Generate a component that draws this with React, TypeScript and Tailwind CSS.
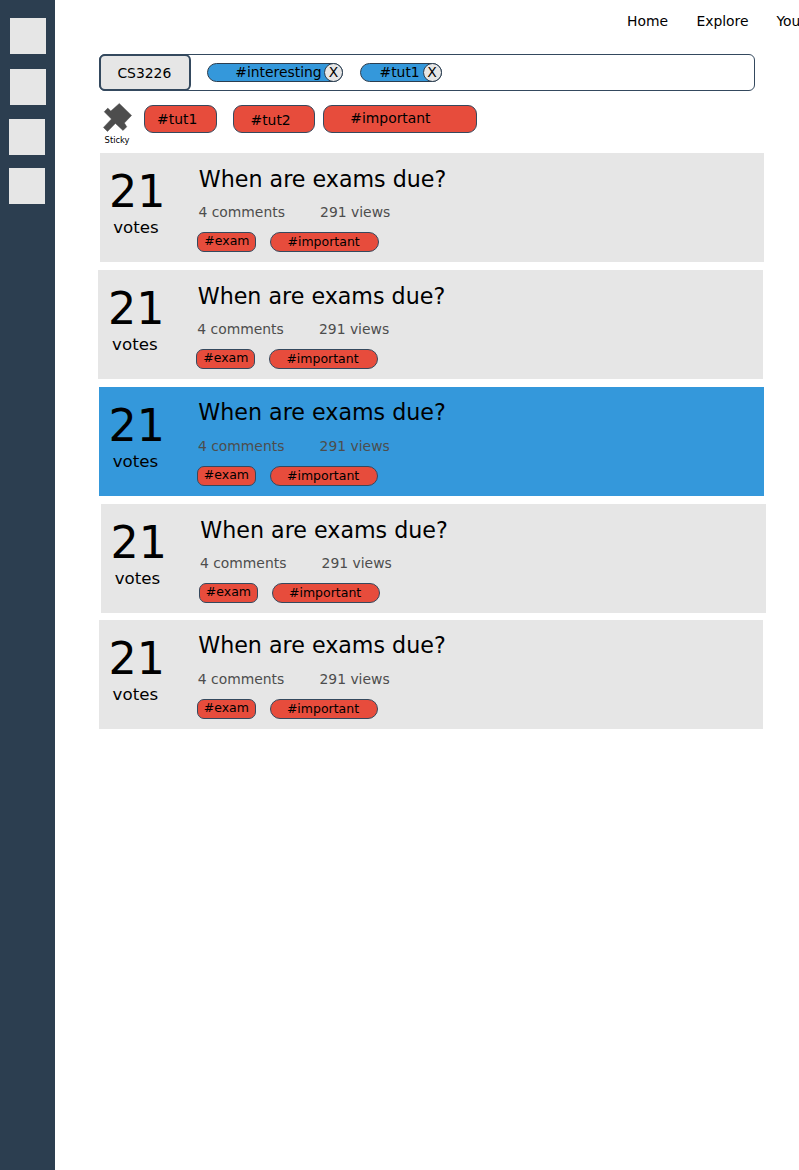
import { clsx } from "clsx";

const cards = [
  { place: "ml-[99.5px] mt-0 h-[109px]", head: "pt-[11px] pb-[8px]", active: false },
  { place: "ml-[98.4px] mt-[8px] h-[109px]", head: "pt-[11px] pb-[8px]", active: false },
  { place: "ml-[99px] mt-[8px] h-[109px]", head: "pt-[10px] pb-[9px]", active: true },
  { place: "ml-[101px] mt-[8px] h-[109px]", head: "pt-[11px] pb-[8px]", active: false },
  { place: "ml-[98.9px] mt-[7px] h-[109px]", head: "pt-[10px] pb-[9px]", active: false },
];

const shortcuts = ["ml-[10px]", "mt-[15px] ml-[10px]", "mt-[14px] ml-[9px]", "mt-[13px] ml-[9px]"];

function FilterPill({ label, className, labelClass }: { label: string; className: string; labelClass: string }) {
  return (
    <div
      className={clsx(
        "flex h-[19px] items-start justify-end rounded-full border border-[#2c3e50] bg-[#3498db] text-[13.9px] leading-4",
        className,
      )}
    >
      <span className={labelClass}>{label}</span>
      <span className="-my-px -mr-px flex size-[19px] shrink-0 items-start justify-center rounded-full border border-[#2c3e50] bg-[#e6e6e6]">
        X
      </span>
    </div>
  );
}

function StickyTag({ label, className }: { label: string; className: string }) {
  return (
    <div
      className={clsx(
        "h-7 rounded-[9px] border border-[#34495e] bg-[#e74c3c] text-[13.9px] leading-5",
        className,
      )}
    >
      {label}
    </div>
  );
}

function QuestionCard({ place, head, active }: { place: string; head: string; active: boolean }) {
  return (
    <article className={clsx("flex w-[664.5px] shrink-0", active ? "bg-[#3498db]" : "bg-[#e6e6e6]", place)}>
      <div className="w-[97.8px] shrink-0 pt-[15.5px] pl-[9.6px]">
        <div className="text-[44.4px] leading-[46px]">21</div>
        <div className="mt-[0.5px] pl-[4.1px] text-[16.66px] leading-[25px]">votes</div>
      </div>
      <div>
        <h2 className={clsx("pl-[1.5px] text-[22.2px] leading-[30px]", head)}>When are exams due?</h2>
        <div className="flex pl-[1.1px] text-[13.9px] leading-5 text-[#4d4d4d]">
          <span className="w-[121.7px]">4 comments</span>
          <span>291 views</span>
        </div>
        <div className="mt-[10px] flex gap-[14px] text-[12.5px] leading-[15px]">
          <span className="h-5 w-[59px] rounded-[7px] border border-[#34495e] bg-[#e74c3c] pl-[6px]">#exam</span>
          <span className="h-5 w-[108.5px] rounded-[10px] border border-[#34495e] bg-[#e74c3c] pt-[1px] pl-[16.2px]">
            #important
          </span>
        </div>
      </div>
    </article>
  );
}

export default function App() {
  return (
    <div className="flex h-[1170px] w-[799px] overflow-hidden bg-white font-['DejaVu_Sans',sans-serif] text-black">
      <aside className="w-[55px] shrink-0 bg-[#2c3e50] pt-[18px]">
        {shortcuts.map((place, i) => (
          <div key={i} className={clsx("size-9 bg-[#e6e6e6]", place)} />
        ))}
      </aside>

      <main className="-ml-[55px] flex min-w-0 flex-1 flex-col">
        <nav className="flex h-[54px] shrink-0 pt-[11px] pl-[627px] text-[13.9px] leading-5 whitespace-nowrap">
          <a className="w-[69.4px] shrink-0">Home</a>
          <a className="w-[80px] shrink-0">Explore</a>
          <a className="shrink-0">You</a>
        </nav>

        <div className="ml-[99px] flex h-[37px] w-[656px] shrink-0 items-center rounded-[6px] border border-[#34495e]">
          <div className="-ml-px h-[37px] w-[92px] shrink-0 rounded-[6px] border-2 border-[#34495e] bg-[#e6e6e6] pt-[7px] pl-[16.4px] text-[13.9px] leading-5">
            CS3226
          </div>
          <FilterPill label="#interesting" className="ml-4 w-[136px]" labelClass="mr-[2.3px]" />
          <FilterPill label="#tut1" className="ml-[17px] w-[81.5px]" labelClass="mr-[2.8px]" />
        </div>

        <div className="ml-[103px] flex h-[62px] shrink-0 pt-[12px]">
          <div className="w-[29px] shrink-0">
            <svg
              viewBox="0 0 29 29"
              className="block size-[29px] overflow-visible"
              fill="#4d4d4d"
              stroke="#4d4d4d"
              strokeWidth="0.4"
            >
              <path d="M16.3 .4 28.6 12.4 21.4 20 23.8 23.8 20 27.6 12.4 20.4 4.5 28.5 .4 24.4 8.4 16 1.2 8.8 4.8 5.1 7.8 8Z" />
            </svg>
            <div className="mt-[3px] pl-[1.6px] text-[8.33px] leading-[10px]">Sticky</div>
          </div>
          <StickyTag label="#tut1" className="mt-[2px] ml-[11.5px] w-[73px] pt-[3px] pl-[12.6px]" />
          <StickyTag label="#tut2" className="mt-[2px] ml-[16.5px] w-[82px] pt-[4px] pl-[16.5px]" />
          <StickyTag label="#important" className="mt-[2px] ml-[8px] w-[154px] pt-[2px] pl-[26.3px]" />
        </div>

        {cards.map((card, i) => (
          <QuestionCard key={i} {...card} />
        ))}
      </main>
    </div>
  );
}
